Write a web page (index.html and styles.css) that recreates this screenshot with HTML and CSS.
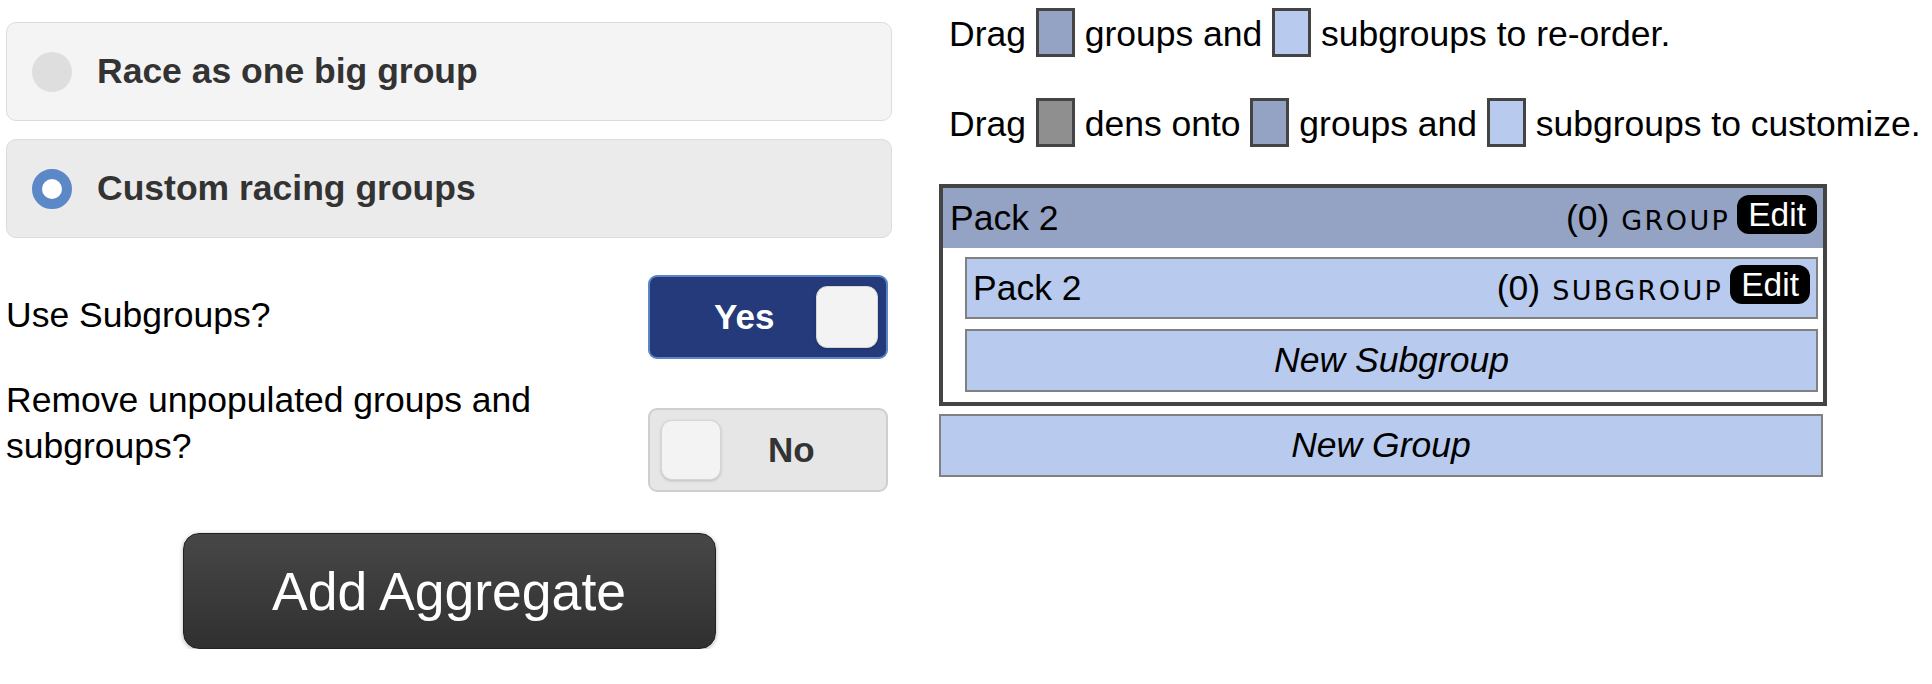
FILE: index.html
```html
<!DOCTYPE html>
<html>
<head>
<meta charset="utf-8">
<title>Racing groups</title>
<link rel="stylesheet" href="styles.css">
</head>
<body>
<div class="page">
  <div class="left">
    <div class="radio">
      <span class="radio-icon"></span><span class="radio-text">Race as one big group</span>
    </div>
    <div class="radio radio-on">
      <span class="radio-icon"></span><span class="radio-text">Custom racing groups</span>
    </div>
    <div class="opt-row row-sub">
      <div class="opt-label">Use Subgroups?</div>
      <div class="flip flip-on"><span class="flip-text">Yes</span><span class="flip-handle"></span></div>
    </div>
    <div class="opt-row row-remove">
      <div class="opt-label">Remove unpopulated groups and subgroups?</div>
      <div class="flip flip-off"><span class="flip-handle"></span><span class="flip-text">No</span></div>
    </div>
    <div class="btn-wrap"><button class="add-btn">Add Aggregate</button></div>
  </div>
  <div class="right">
    <p class="hint">Drag <span class="sw sw-group"></span> groups and <span class="sw sw-sub"></span> subgroups to re-order.</p>
    <p class="hint">Drag <span class="sw sw-den"></span> dens onto <span class="sw sw-group"></span> groups and <span class="sw sw-sub"></span> subgroups to customize.</p>
    <div class="group">
      <div class="row group-head">
        <span class="name">Pack 2</span>
        <span class="count">(0)<span class="kind">group</span></span>
        <span class="edit">Edit</span>
      </div>
      <div class="row subgroup">
        <span class="name">Pack 2</span>
        <span class="count">(0)<span class="kind">subgroup</span></span>
        <span class="edit">Edit</span>
      </div>
      <div class="new-box new-sub">New Subgroup</div>
    </div>
    <div class="new-box new-group">New Group</div>
  </div>
</div>
</body>
</html>
```
FILE: styles.css
```css
html, body {
  margin: 0;
  padding: 0;
  background: #fff;
}
body {
  font-family: "Liberation Sans", Arial, sans-serif;
  font-size: 35.5px;
  color: #000;
}
.page {
  display: flex;
  align-items: flex-start;
  padding-left: 6px;
}
.left {
  width: 886px;
  padding-top: 22px;
}
.right {
  margin-left: 47px;
  padding-top: 8px;
}

/* radio choices */
.radio {
  box-sizing: border-box;
  height: 99px;
  border: 1px solid #dcdcdc;
  border-radius: 10px;
  background: #f4f4f5;
  display: flex;
  align-items: center;
  padding-left: 25px;
  font-weight: bold;
  color: #333;
}
.radio + .radio {
  margin-top: 18px;
}
.radio-on {
  background: #ebebeb;
}
.radio-icon {
  box-sizing: border-box;
  width: 40px;
  height: 40px;
  border-radius: 50%;
  background: #dedede;
  margin-right: 25px;
  flex: none;
}
.radio-on .radio-icon {
  background: #fff;
  border: 10px solid #5d88c8;
}

/* option rows with flip switches */
.opt-row {
  display: flex;
  justify-content: space-between;
  align-items: flex-start;
}
.opt-label {
  width: 600px;
  line-height: 46px;
}
.row-sub {
  margin-top: 37px;
}
.row-sub .opt-label {
  margin-top: 17px;
}
.row-remove {
  margin-top: 18px;
}
.row-remove .flip {
  margin-top: 31px;
}
.flip {
  box-sizing: border-box;
  width: 240px;
  height: 84px;
  margin-right: 4px;
  border-radius: 9px;
  display: flex;
  align-items: center;
  font-weight: bold;
  font-size: 35px;
  flex: none;
}
.flip-handle {
  box-sizing: border-box;
  width: 62px;
  height: 62px;
  border-radius: 11px;
  background: #f3f3f4;
  border: 1px solid #d6d6d6;
  box-shadow: 0 1px 3px rgba(0, 0, 0, 0.18);
  flex: none;
}
.flip-on {
  background: #243a7b;
  border: 2px solid #5a85c6;
  color: #fff;
}
.flip-on .flip-text {
  margin-left: 64px;
}
.flip-on .flip-handle {
  margin-left: auto;
  margin-right: 8px;
}
.flip-off {
  background: #e6e6e6;
  border: 2px solid #cfcfcf;
  color: #333;
}
.flip-off .flip-handle {
  width: 60px;
  height: 60px;
  margin-left: 11px;
}
.flip-off .flip-text {
  margin-left: 47px;
}

/* add button */
.btn-wrap {
  display: flex;
  justify-content: center;
  margin-top: 41px;
}
.add-btn {
  box-sizing: border-box;
  width: 533px;
  height: 116px;
  border-radius: 16px;
  border: 1px solid #222;
  background: linear-gradient(#474747, #303030);
  color: #fff;
  font-family: "Liberation Sans", Arial, sans-serif;
  font-size: 53.5px;
  box-shadow: 0 1px 4px rgba(0, 0, 0, 0.3);
  padding: 0;
}

/* hints */
.hint {
  margin: 0;
  padding-left: 10px;
  line-height: 46px;
  white-space: nowrap;
}
.hint + .hint {
  margin-top: 41px;
}
.sw {
  display: inline-block;
  width: 33px;
  height: 43px;
  border: 3px solid #444;
  vertical-align: -11px;
}
.sw-group { background: #94a3c4; }
.sw-sub { background: #b8caed; }
.sw-den { background: #8f8f8f; }

/* groups */
.group {
  box-sizing: border-box;
  width: 888px;
  border: 4px solid #444;
  margin-top: 37px;
  padding-bottom: 10px;
}
.row {
  display: flex;
  align-items: center;
}
.row .name {
  flex: 1;
}
.group-head {
  height: 60px;
  background: #94a3c4;
  padding: 0 6px 0 7px;
}
.subgroup {
  box-sizing: border-box;
  height: 62px;
  margin: 9px 5px 0 22px;
  border: 2px solid #808080;
  background: #b8caed;
  padding: 0 6px 0 6px;
}
.kind {
  font-family: "DejaVu Sans", Verdana, sans-serif;
  font-size: 27px;
  text-transform: uppercase;
  letter-spacing: 2.4px;
  margin-left: 12px;
}
.edit {
  background: #000;
  color: #fff;
  border-radius: 12px;
  height: 39px;
  line-height: 39px;
  padding: 0 11px;
  font-size: 33.5px;
  margin-left: 7px;
  margin-bottom: 7px;
}
.new-box {
  box-sizing: border-box;
  height: 63px;
  border: 2px solid #808080;
  background: #b8caed;
  display: flex;
  align-items: center;
  justify-content: center;
  font-style: italic;
}
.new-sub {
  margin: 10px 5px 0 22px;
}
.new-group {
  width: 884px;
  margin-top: 8px;
}
```
